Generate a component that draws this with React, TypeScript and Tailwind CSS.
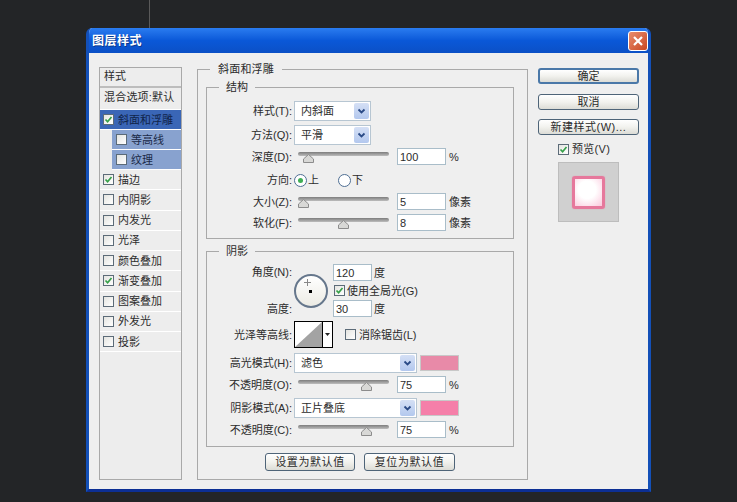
import type { ReactNode } from "react";

const layers = [
  { name: "描边", on: true },
  { name: "内阴影", on: false },
  { name: "内发光", on: false },
  { name: "光泽", on: false },
  { name: "颜色叠加", on: false },
  { name: "渐变叠加", on: true },
  { name: "图案叠加", on: false },
  { name: "外发光", on: false },
  { name: "投影", on: false },
];

function Check({ on = false }: { on?: boolean }) {
  return (
    <span className="flex h-[11px] w-[11px] shrink-0 items-center justify-center border border-[#5c6b78] bg-gradient-to-br from-[#e4e4e0] to-white">
      {on && (
        <svg viewBox="0 0 9 9" className="h-[9px] w-[9px]">
          <path d="M1.5 4.5 L3.6 6.8 L7.5 2" fill="none" stroke="#35a048" strokeWidth="1.7" />
        </svg>
      )}
    </span>
  );
}

function Radio({ on = false }: { on?: boolean }) {
  return (
    <span className="flex h-[13px] w-[13px] items-center justify-center rounded-full border border-[#4f6f94] bg-white">
      {on && <span className="h-[5px] w-[5px] rounded-full bg-[#3fae55]" />}
    </span>
  );
}

function Select({ value, width }: { value: string; width: string }) {
  return (
    <div className={`flex h-[20px] items-center justify-between border border-[#b7c6d2] bg-white pl-[6px] pr-[1px] ${width}`}>
      <span>{value}</span>
      <span className="flex h-[16px] w-[15px] items-center justify-center rounded-[2px] bg-gradient-to-b from-[#d5e0f5] to-[#b3c8ee]">
        <svg viewBox="0 0 9 7" className="h-[7px] w-[9px]">
          <path d="M1.5 1.5 L4.5 4.5 L7.5 1.5" fill="none" stroke="#2a4a86" strokeWidth="1.8" />
        </svg>
      </span>
    </div>
  );
}

function Slider({ pos }: { pos: number }) {
  return (
    <div className="relative ml-[4px] h-[17px] w-[91px]">
      <div className="mt-[4px] h-[4px] rounded-full bg-gradient-to-b from-[#7d7d7d] to-[#bdbdbd]" />
      <svg viewBox="0 0 11 9" className="absolute top-[6px] h-[9px] w-[11px]" style={{ left: pos }}>
        <path d="M5.5 .5 L10.5 5 V8.5 H.5 V5 Z" fill="#d8d8d6" stroke="#8c8c8c" />
      </svg>
    </div>
  );
}

function NumField({ value, width = "w-[49px]" }: { value: string; width?: string }) {
  return (
    <div className={`flex h-[17px] items-center border border-[#a9bdc9] bg-white pl-[2px] ${width}`}>{value}</div>
  );
}

function Row({ label, className = "", children }: { label: string; className?: string; children: ReactNode }) {
  return (
    <div className={`flex items-center ${className}`}>
      <span className="w-[85px] shrink-0 whitespace-nowrap text-right">{label}</span>
      <div className="ml-[2px] flex items-center">{children}</div>
    </div>
  );
}

function SliderRow({ label, pos, value, unit, className = "" }: { label: string; pos: number; value: string; unit: string; className?: string }) {
  return (
    <Row label={label} className={className}>
      <Slider pos={pos} />
      <div className="ml-[8px]">
        <NumField value={value} />
      </div>
      <span className="ml-[3px]">{unit}</span>
    </Row>
  );
}

function Btn({ label, width, heavy = false, className = "" }: { label: string; width: string; heavy?: boolean; className?: string }) {
  return (
    <div
      className={`flex items-center justify-center rounded-[3px] border bg-gradient-to-b from-white via-[#f2f2ee] to-[#dcdcd6] ${
        heavy ? "border-2 border-[#4a78a8]" : "border-[#4e6478]"
      } ${width} ${className}`}
    >
      {label}
    </div>
  );
}

export default function App() {
  return (
    <div className="relative h-[502px] w-[737px] overflow-hidden bg-[#232527] pl-[86px] pt-[28px] text-[11px] leading-[14px] text-[#2c2c2c] [font-family:'Liberation_Sans','Noto_Sans_CJK_SC',sans-serif]">
      {/* guide line above the dialog */}
      <div className="absolute left-[149px] top-0 h-[28px] w-px bg-[#5a5a5a]" />

      <div className="flex h-[464px] w-[565px] flex-col overflow-hidden rounded-t-[6px] border-x-[3px] border-b-[3px] border-x-[#1350b8] border-b-[#0c2f94] bg-[#efefef]">
        {/* title bar */}
        <div className="-mx-[3px] flex h-[25px] shrink-0 items-center justify-between bg-gradient-to-b from-[#2a7cf0] via-[#0a58d8] to-[#0b50c6] pl-[6px] pr-[3px]">
          <span className="text-[12px] font-bold tracking-[0.5px] text-white [text-shadow:1px_1px_0_#0a3a90]">图层样式</span>
          <span className="flex h-[20px] w-[20px] items-center justify-center rounded-[3px] border border-white bg-gradient-to-br from-[#e88c6c] to-[#c8461f]">
            <svg viewBox="0 0 12 12" className="h-[12px] w-[12px]">
              <path d="M2 2 L10 10 M10 2 L2 10" stroke="white" strokeWidth="2.2" />
            </svg>
          </span>
        </div>

        <div className="flex flex-1 items-start pl-[10px] pt-[9px]">
          {/* layer style list */}
          <div className="mt-[5px] h-[413px] w-[83px] shrink-0 border border-[#a9a9a9] bg-[#ededed]">
            <div className="flex h-[20px] items-center border-b-2 border-[#bdbdbd] pb-[3px] pl-[4px]">样式</div>
            <div className="flex h-[21px] items-center pb-[3px] pl-[4px] tracking-[0.2px]">混合选项:默认</div>
            <div className="flex h-[21px] items-center gap-[4px] border-y border-white bg-[#3a66b6] pl-[3px] text-[#10244a]">
              <Check on />
              斜面和浮雕
            </div>
            <div className="ml-[12px] flex h-[20px] items-center gap-[4px] border-b border-white bg-[#88a2cf] pl-[4px] text-[#1b2a48]">
              <Check />
              等高线
            </div>
            <div className="ml-[12px] flex h-[20px] items-center gap-[4px] border-b border-white bg-[#88a2cf] pl-[4px] text-[#1b2a48]">
              <Check />
              纹理
            </div>
            {layers.map((l) => (
              <div key={l.name} className="flex h-[20.25px] items-center gap-[4px] border-b border-white pl-[3px]">
                <Check on={l.on} />
                {l.name}
              </div>
            ))}
          </div>

          {/* settings */}
          <fieldset className="ml-[15px] h-[418px] w-[331px] shrink-0 border border-[#a9a9a9] pl-[8px] pt-[4px]">
            <legend className="ml-[4px] px-[8px] tracking-[0.2px]">斜面和浮雕</legend>

            <fieldset className="h-[159px] w-[308px] border border-[#a9a9a9]">
              <legend className="ml-[12px] px-[7px]">结构</legend>
              <Row label="样式(T):" className="mt-[7px]">
                <Select value="内斜面" width="w-[77px]" />
              </Row>
              <Row label="方法(Q):" className="mt-[4px]">
                <Select value="平滑" width="w-[77px]" />
              </Row>
              <SliderRow label="深度(D):" pos={5} value="100" unit="%" className="mt-[3px]" />
              <Row label="方向:" className="mt-[5px] h-[20px]">
                <Radio on />
                <span className="ml-[1px]">上</span>
                <span className="ml-[19px]">
                  <Radio />
                </span>
                <span className="ml-[1px]">下</span>
              </Row>
              <SliderRow label="大小(Z):" pos={0} value="5" unit="像素" className="mt-[3px]" />
              <SliderRow label="软化(F):" pos={40} value="8" unit="像素" className="mt-[4px]" />
            </fieldset>

            <fieldset className="mt-[5px] h-[203px] w-[308px] border border-[#a9a9a9]">
              <legend className="ml-[12px] px-[7px]">阴影</legend>

              <div className="mt-[6px] flex h-[53px]">
                <div className="flex w-[85px] shrink-0 flex-col justify-between py-px text-right">
                  <span>角度(N):</span>
                  <span>高度:</span>
                </div>
                {/* angle dial */}
                <div className="relative ml-[2px] mt-[10px] h-[34px] w-[34px] shrink-0 rounded-full border-2 border-[#66778c] bg-gradient-to-b from-white to-[#ecebe4]">
                  <span className="absolute left-[13px] top-[14px] h-[3px] w-[3px] bg-black" />
                  <svg viewBox="0 0 7 7" className="absolute left-[8px] top-[3px] h-[7px] w-[7px]">
                    <path d="M3.5 0 V7 M0 3.5 H7" stroke="#888" strokeWidth="1" />
                  </svg>
                </div>
                <div className="ml-[5px] flex flex-col justify-between">
                  <div className="flex items-center">
                    <NumField value="120" width="w-[39px]" />
                    <span className="ml-[2px]">度</span>
                  </div>
                  <div className="flex items-center gap-[2px] pl-[1px]">
                    <Check on />
                    使用全局光(G)
                  </div>
                  <div className="flex items-center">
                    <NumField value="30" width="w-[39px]" />
                    <span className="ml-[2px]">度</span>
                  </div>
                </div>
              </div>

              <Row label="光泽等高线:" className="mt-[4px]">
                <div className="flex h-[27px] w-[39px] border border-black bg-white">
                  <svg viewBox="0 0 27 25" preserveAspectRatio="none" className="h-full w-[27px]">
                    <path d="M0 25 L27 0 V25 Z" fill="#a3a3a3" />
                  </svg>
                  <div className="flex flex-1 items-center justify-center border-l border-black">
                    <svg viewBox="0 0 5 3" className="h-[3px] w-[5px]">
                      <path d="M0 0 H5 L2.5 3 Z" fill="#222" />
                    </svg>
                  </div>
                </div>
                <div className="ml-[12px] flex items-center gap-[3px]">
                  <Check />
                  消除锯齿(L)
                </div>
              </Row>

              <Row label="高光模式(H):" className="mt-[5px]">
                <Select value="滤色" width="w-[123px]" />
                <div className="ml-[3px] h-[16px] w-[39px] border border-[#c8c8c8] bg-[#e88aa8]" />
              </Row>
              <SliderRow label="不透明度(O):" pos={63} value="75" unit="%" className="mt-[3px]" />
              <Row label="阴影模式(A):" className="mt-[5px]">
                <Select value="正片叠底" width="w-[123px]" />
                <div className="ml-[3px] h-[16px] w-[39px] border border-[#c8c8c8] bg-[#f57fa9]" />
              </Row>
              <SliderRow label="不透明度(C):" pos={63} value="75" unit="%" className="mt-[3px]" />
            </fieldset>

            <div className="mt-[6px] flex gap-[9px] pl-[59px] tracking-[0.6px]">
              <Btn label="设置为默认值" width="w-[90px]" className="h-[18px]" />
              <Btn label="复位为默认值" width="w-[91px]" className="h-[18px]" />
            </div>
          </fieldset>

          {/* actions */}
          <div className="ml-[10px] mt-[6px] flex w-[101px] shrink-0 flex-col">
            <Btn label="确定" width="w-full" heavy className="h-[16px]" />
            <Btn label="取消" width="w-full" className="mt-[10px] h-[16px]" />
            <Btn label="新建样式(W)..." width="w-full" className="mt-[9px] h-[16px] tracking-[0.5px]" />
            <div className="mt-[7px] flex items-center gap-[3px] pl-[20px] tracking-[0.3px]">
              <Check on />
              预览(V)
            </div>
            <div className="ml-[20px] mt-[6px] flex h-[60px] w-[61px] items-center justify-center border border-[#bdbdbd] bg-[#d0d0d0]">
              <div className="h-[33px] w-[33px] rounded-[3px] border-[3px] border-[#e6789c] bg-[radial-gradient(circle_at_45%_40%,#ffffff_40%,#fbc8dc_100%)] shadow-[0_0_1px_#e6789c]" />
            </div>
          </div>
        </div>
      </div>
    </div>
  );
}
